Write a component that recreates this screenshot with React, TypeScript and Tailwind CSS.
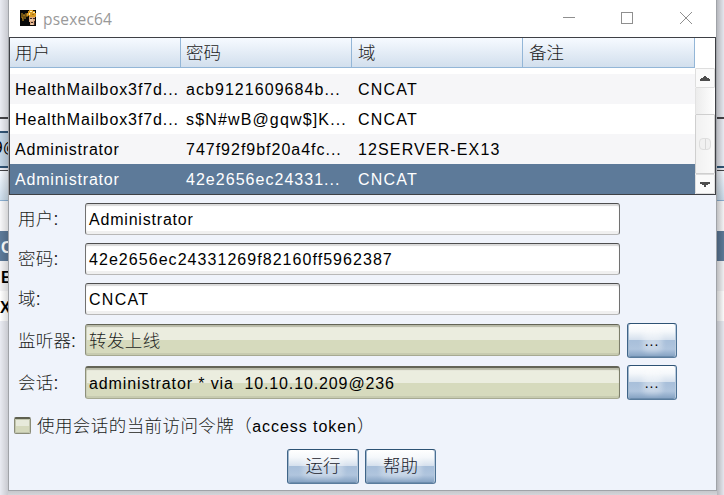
import React from 'react';

const columns = ['用户', '密码', '域', '备注'];

const rows = [
  { cells: ['HealthMailbox3f7d...', 'acb9121609684b...', 'CNCAT', ''], tone: 'bg-[#f6f6f8] text-black', spacing: ['tracking-[0.9px]', 'tracking-[1.05px]', 'tracking-[1.2px]'] },
  { cells: ['HealthMailbox3f7d...', 's$N#wB@gqw$]K...', 'CNCAT', ''], tone: 'bg-white text-black', spacing: ['tracking-[0.9px]', 'tracking-[1.15px]', 'tracking-[1.2px]'] },
  { cells: ['Administrator', '747f92f9bf20a4fc...', '12SERVER-EX13', ''], tone: 'bg-[#f6f6f8] text-black', spacing: ['tracking-[0.8px]', 'tracking-[0.99px]', 'tracking-[1.13px]'] },
  { cells: ['Administrator', '42e2656ec24331...', 'CNCAT', ''], tone: 'bg-[#5d7a99] text-white', spacing: ['tracking-[0.8px]', 'tracking-[1.03px]', 'tracking-[1.2px]'] },
];

const cjk = "font-['Liberation_Sans','Noto_Sans_CJK_SC',sans-serif] text-[17.5px] font-light";

function Backdrop({ side }: { side: 'left' | 'right' }) {
  const left = side === 'left';
  return (
    <div className={`relative flex h-[495px] shrink-0 flex-col overflow-hidden bg-[#e9ebf2] text-base font-bold leading-[33px] ${left ? 'w-2' : 'w-[7px]'}`}>
      <div className="h-[117px] shrink-0" />
      <div className="h-[2px] shrink-0 bg-[#444448]" />
      <div className="h-[12px] shrink-0 bg-[#eceef5]" />
      {left ? (
        <>
          <div className="h-[2px] shrink-0 bg-[#315576]" />
          <div className="flex h-[33px] shrink-0 justify-end overflow-hidden whitespace-nowrap bg-[#c4d6e6] pt-[3px] text-base font-normal"><span className="-mr-[11px]">9@</span></div>
          <div className="h-[2px] shrink-0 bg-[#315576]" />
          <div className="h-[2px] shrink-0 bg-[#eceef5]" />
        </>
      ) : (
        <>
          <div className="h-[35px] shrink-0 bg-[#eceef5]" />
          <div className="h-[2px] shrink-0 bg-[#315576]" />
          <div className="h-[2px] shrink-0 bg-[#eceef5]" />
        </>
      )}
      <div className="h-px shrink-0 bg-[#444448]" />
      <div className="h-[29px] shrink-0 bg-linear-to-b from-[#f4f8fe] to-[#cbdceb]" />
      <div className="h-px shrink-0 bg-[#8cb0d2]" />
      <div className="h-[30px] shrink-0 bg-[#f7f7f9]" />
      <div className="h-[30px] shrink-0 overflow-hidden bg-[#5d7a99] pl-px text-white">{left ? 'C' : ''}</div>
      <div className="h-[30px] shrink-0 overflow-hidden bg-[#f3f3f5] pl-px">{left ? 'E' : ''}</div>
      <div className="h-[30px] shrink-0 overflow-hidden bg-white">{left ? 'X' : ''}</div>
      <div className={`absolute inset-0 ${left ? 'bg-linear-to-l from-black/14 to-black/0' : 'bg-linear-to-r from-black/22 to-black/2'}`} />
    </div>
  );
}

function TitleBar() {
  return (
    <div className="flex h-[37px] shrink-0 items-center bg-white pl-[11px] text-[#999]">
      <svg className="-mt-[2px]" width="16" height="16" viewBox="0 0 16 16" shapeRendering="crispEdges">
        <path fill="#080909" d="M0 0h16v16H0z" />
        <path fill="#6b5014" d="M1 3h2v1h2v-1h3v4H6v2H4v2H2V8H1z" />
        <path fill="#9e6e14" d="M3 5h2v1H3zM2 7h1v2H2zM6 4h2v2H6z" />
        <path fill="#d99b25" d="M9 0h4v1h2v2h1v4h-2v1H9V6H7V3h1V1h1z" />
        <path fill="#fff0b2" d="M10 1h2v1h-2zM13 2h2v1h-2zM9 3h1v2H9z" />
        <path fill="#9e6e14" d="M12 4h2v1h-2zM8 5h1v1H8z" />
        <path fill="#d9a77e" d="M9 7h6v5h-1v3h-4v-3H9z" />
        <path fill="#3f2924" d="M10 8h2v1h-2zM13 8h2v1h-2zM11 12h2v1h-2zM14 11h1v4h-1z" />
        <path fill="#e9c6a5" d="M10 9h3v2h-3zM11 13h2v2h-2z" />
      </svg>
      <span className="ml-[7px] font-['Open_Sans',sans-serif] text-[15.5px] leading-5 tracking-[0.2px]">psexec64</span>
      <svg className="ml-auto mr-[22px] -mt-[4px]" width="132" height="16" fill="none" stroke="#8f8f8f">
        <path d="M1 8.5h12M59.5 3.5h11v11h-11z" shapeRendering="crispEdges" />
        <path d="m118 3 12 12m0-12-12 12" />
      </svg>
    </div>
  );
}

function Scrollbar() {
  return (
    <div className="flex w-5 shrink-0 flex-col bg-white pt-[30px]">
      <div className="flex h-5 shrink-0 items-center justify-center rounded-[1px] border border-[#dedede] bg-[#fafafa]">
        <svg width="10" height="5" shapeRendering="crispEdges"><path d="M4 0h2v1h1v1h2v1h1v2H0V3h1V2h2V1h1z" fill="#4c4c4c" /></svg>
      </div>
      <div className="h-[26px] shrink-0 border-l border-[#e2e2e2] bg-linear-to-r from-[#ececec] to-white" />
      <div className="flex h-[60px] shrink-0 items-center justify-center rounded-[1px] border border-[#cfcfcf] bg-linear-to-r from-[#f1f1f1] to-[#fafafa]">
        <div className="flex size-3 justify-center rounded-[4px] border border-[#dedede] bg-[#f1f1f1]"><div className="w-px bg-[#d8d8d8]" /></div>
      </div>
      <div className="flex h-5 shrink-0 items-center justify-center rounded-[1px] border border-[#dedede] bg-[#fafafa]">
        <svg width="10" height="5" shapeRendering="crispEdges"><path d="M0 0h10v2H8v1H6v2H4V3H2V2H0z" fill="#4c4c4c" /></svg>
      </div>
    </div>
  );
}

function CredentialTable() {
  return (
    <div className="flex h-[158px] w-[707px] shrink-0 border border-[#3e4045] bg-white">
      <div className="w-[685px] shrink-0">
        <div className="flex h-[30px] border-b border-[#93b6d7] bg-linear-to-b from-[#f6faff] to-[#d2dfed]">
          {columns.map((c, i) => (
            <div key={c} className={`${cjk} border-r border-[#93b6d7] leading-[30px] text-[#1c1c1c] ${i === 3 ? 'w-[172px] pl-[6px]' : i === 2 ? 'w-[171px] pl-[6px]' : 'w-[171px] pl-[5px]'}`}>{c}</div>
          ))}
        </div>
        <div className="h-[6px] bg-white" />
        {rows.map((r, n) => (
          <div key={n} className={`flex h-[30px] whitespace-nowrap text-base leading-[31px] ${r.tone}`}>
            <div className={`w-[171px] pl-[5px] ${r.spacing[0]}`}>{r.cells[0]}</div>
            <div className={`w-[171px] pl-[5px] ${r.spacing[1]}`}>{r.cells[1]}</div>
            <div className={`w-[171px] pl-[6px] ${r.spacing[2]}`}>{r.cells[2]}</div>
            <div className="w-[172px]">{r.cells[3]}</div>
          </div>
        ))}
      </div>
      <Scrollbar />
    </div>
  );
}

function Field({ label, value, spacing }: { label: string; value: string; spacing: string }) {
  return (
    <div className="flex h-8 items-center">
      <span className={`${cjk} w-[67px] leading-8 tracking-[0.2px] text-[#1c1e22]`}>{label}</span>
      <div className={`h-8 w-[535px] whitespace-nowrap rounded-[3px] border border-t-[#4e4e4e] border-r-[#717171] border-b-[#b8b8b8] border-l-[#717171] bg-white pl-[3px] text-base leading-8 text-black shadow-[inset_0_2px_1px_#dadada,inset_0_-3px_0_#f0f0f0] ${spacing}`}>{value}</div>
    </div>
  );
}

function Picker({ label, value, session = false }: { label: string; value: string; session?: boolean }) {
  return (
    <div className="flex h-[35px] items-center">
      <span className={`${cjk} w-[67px] pt-px leading-[35px] tracking-[0.2px] text-[#1c1e22]`}>{label}</span>
      <div className={`w-[535px] whitespace-pre rounded-[3px] border border-t-[#636456] border-r-[#7c7e6a] border-b-[#a7aa92] border-l-[#8d907a] bg-[linear-gradient(#ebeddf_0_50%,#d6dabd_50%)] pl-[3px] shadow-[inset_0_2px_1px_#b8baa8,inset_0_-2px_0_#c7cbb0,inset_1px_0_#cfd2bd] ${session ? 'h-[33px] border-t-2 text-base leading-[31px] tracking-[0.88px] text-black' : `h-8 ${cjk} -mt-px leading-[32px] tracking-[0.4px] text-[#1c1e22]`}`}>{value}</div>
      <Button className="ml-[7px] h-[35px] w-[50px] pt-[2px] font-['Liberation_Sans'] text-[14px] tracking-[1px] text-black" glow="w-[21px]">...</Button>
    </div>
  );
}

function Button({ children, className, glow }: { children: React.ReactNode; className: string; glow: string }) {
  return (
    <button className={`relative flex shrink-0 items-center justify-center rounded-[3px] border border-t-[#2d5274] border-r-[#4b7093] border-b-[#5a7c9d] border-l-[#3e6488] bg-[linear-gradient(#ffffff_0%,#f5f8fb_22%,#d5e0ed_48%,#a8bfda_50%,#b0c5de_76%,#819fc0_100%)] shadow-[inset_1px_0_#a1b7cd,inset_-1px_0_#bacbdd,inset_0_-1px_#6d8dad] ${className}`}>
      <span className={`absolute inset-y-1 rounded-md bg-radial from-white/45 to-white/15 blur-[2px] ${glow}`} />
      <span className="relative">{children}</span>
    </button>
  );
}

export default function App() {
  return (
    <main className="flex h-[495px] w-[724px] overflow-hidden bg-[#e9ebf2] font-['Liberation_Sans','Noto_Sans_CJK_SC',sans-serif]">
      <Backdrop side="left" />
      <div className="flex w-[709px] shrink-0 flex-col">
        <section className="flex h-[491px] flex-col border border-t-0 border-[#a0a3a8] bg-[#eff3fb]">
          <TitleBar />
          <CredentialTable />
          <div className="flex flex-col gap-2 pl-[9px] pt-[8px]">
            <Field label="用户:" value="Administrator" spacing="tracking-[0.8px]" />
            <Field label="密码:" value="42e2656ec24331269f82160ff5962387" spacing="tracking-[1.05px]" />
            <Field label="域:" value="CNCAT" spacing="tracking-[1.3px]" />
          </div>
          <div className="flex flex-col gap-[7px] pl-[9px] pt-2">
            <Picker label="监听器:" value="转发上线" />
            <Picker label="会话:" value="administrator * via  10.10.10.209@236" session />
          </div>
          <label className="mt-[10px] flex h-[30px] shrink-0 items-center pl-[5px] text-[#1c1e22]">
            <span className="size-[17px] rounded-[2px] border border-t-2 border-[#8b8d79] border-t-[#5e604f] bg-[linear-gradient(#e7eadb_0_50%,#d5d9bd_50%)] shadow-[inset_0_0_0_1px_#c1c5ad]" />
            <span className={`${cjk} ml-[6px] whitespace-nowrap pt-px leading-[30px] tracking-[0.43px]`}>使用会话的当前访问令牌（<span className="text-base font-normal tracking-[0.95px] text-black">access token</span>）</span>
          </label>
          <div className="mt-[9px] flex pl-[278px]">
            <Button className={`${cjk} h-[35px] w-[72px] text-[#1a222c]`} glow="w-[42px]">运行</Button>
            <Button className={`${cjk} ml-[6px] h-[35px] w-[71px] text-[#1a222c]`} glow="w-[42px]">帮助</Button>
          </div>
        </section>
        <div className="h-1 bg-linear-to-b from-[#c5c7cb] to-[#d3d5da]" />
      </div>
      <Backdrop side="right" />
    </main>
  );
}
